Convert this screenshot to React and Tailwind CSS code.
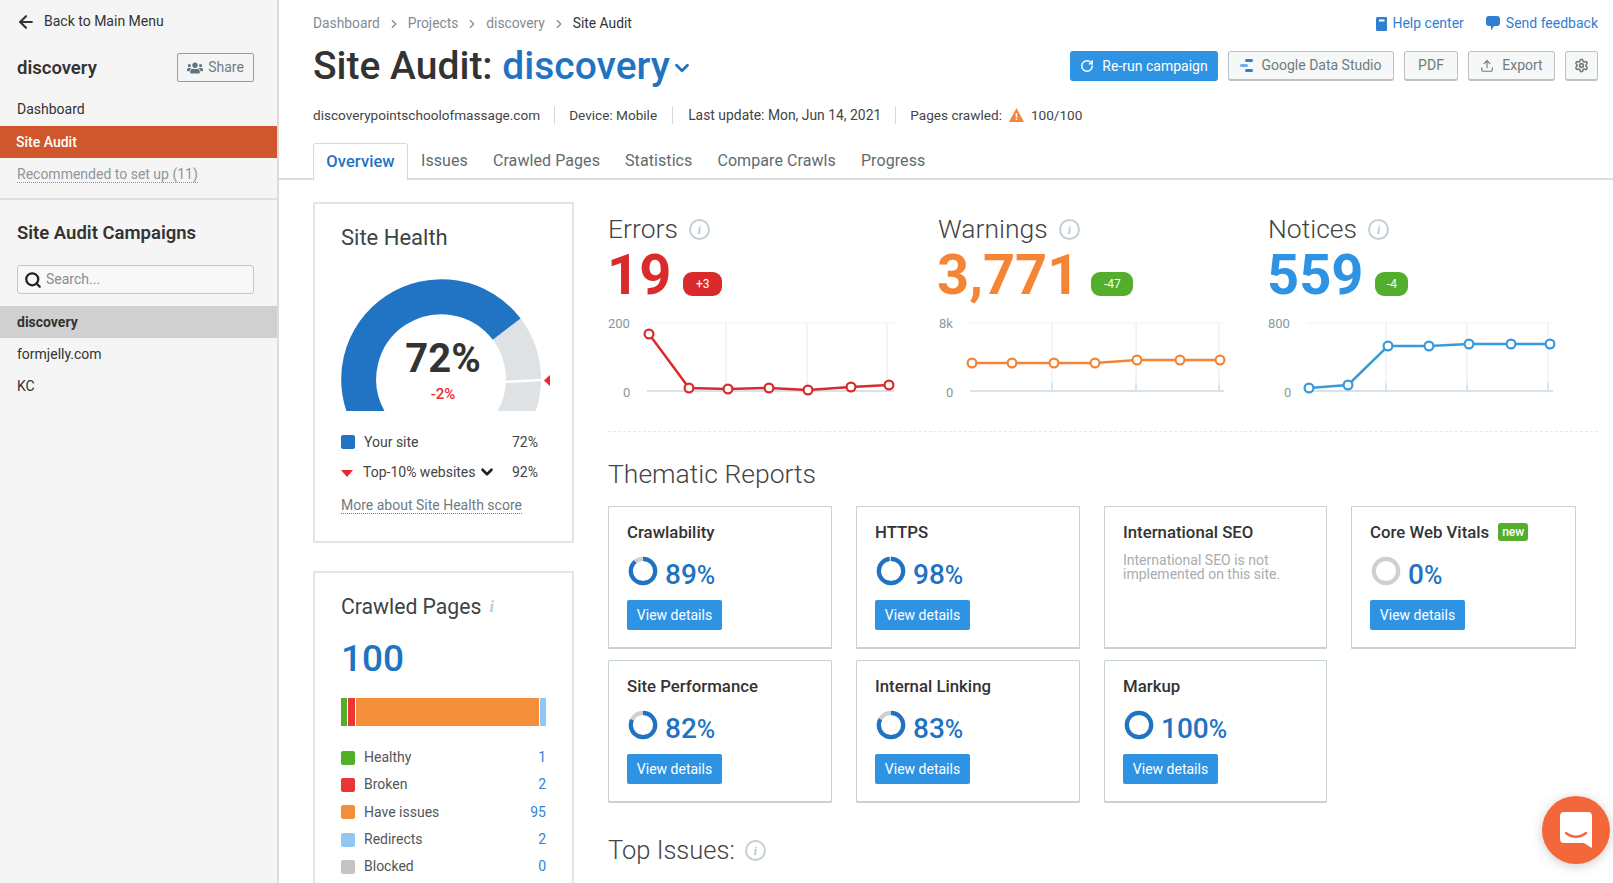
import { ArrowLeft, ChevronRight, ChevronDown, RotateCw, Upload, Settings, Search } from 'lucide-react';
import { FaUsers } from 'react-icons/fa';

const metrics = [
  {
    title: 'Errors', value: '19', badge: '+3', valueColor: 'text-[#d92b2b]', badgeColor: 'bg-[#d92b2b]', badgeWidth: 'w-[39px]', stroke: '#d92b2b',
    top: '200', topX: 0, zeroX: 15, gridFrom: 39, gridTo: 286, vlines: [118, 199, 279],
    points: [[41, 23], [81, 77], [120, 78], [161, 77], [200, 79], [243, 76], [281, 74]],
  },
  {
    title: 'Warnings', value: '3,771', badge: '-47', valueColor: 'text-[#f58536]', badgeColor: 'bg-[#52ae2b]', badgeWidth: 'w-[42px]', stroke: '#f58536',
    top: '8k', topX: 1, zeroX: 8, gridFrom: 32, gridTo: 286, vlines: [114, 198, 281],
    points: [[34, 52], [74, 52], [116, 52], [157, 52], [199, 49], [242, 49], [282, 49]],
  },
  {
    title: 'Notices', value: '559', badge: '-4', valueColor: 'text-[#2f93e4]', badgeColor: 'bg-[#52ae2b]', badgeWidth: 'w-[33px]', stroke: '#3a9ad9',
    top: '800', topX: 0, zeroX: 16, gridFrom: 39, gridTo: 285, vlines: [118, 199, 280],
    points: [[41, 77], [80, 74], [120, 35], [161, 35], [201, 33], [243, 33], [282, 33]],
  },
];

const reports = [
  { title: 'Crawlability', pct: 89 },
  { title: 'HTTPS', pct: 98 },
  { title: 'International SEO', note: true },
  { title: 'Core Web Vitals', pct: 0, isNew: true },
  { title: 'Site Performance', pct: 82 },
  { title: 'Internal Linking', pct: 83 },
  { title: 'Markup', pct: 100 },
];

const crawled = [
  { label: 'Healthy', count: '1', color: 'bg-[#52ae2b]' },
  { label: 'Broken', count: '2', color: 'bg-[#e93535]' },
  { label: 'Have issues', count: '95', color: 'bg-[#f38f3b]' },
  { label: 'Redirects', count: '2', color: 'bg-[#90c8f3]' },
  { label: 'Blocked', count: '0', color: 'bg-[#c4c4c4]' },
];

function Info() {
  return (
    <span className="flex h-[21px] w-[21px] items-center justify-center rounded-full border-2 border-[#c3d1d6] font-['Liberation_Serif',serif] text-[13px] italic leading-none text-[#9fb2b9]">
      i
    </span>
  );
}

function Donut({ pct }) {
  return (
    <svg width="30" height="30" viewBox="0 0 30 30" className="shrink-0">
      <circle cx="15" cy="15" r="12.2" fill="none" stroke="#cfcfcf" strokeWidth="4.2" />
      {pct > 0 && (
        <circle
          cx="15"
          cy="15"
          r="12.2"
          fill="none"
          stroke="#1f73c2"
          strokeWidth="4.2"
          pathLength="100"
          strokeDasharray={`${pct} 100`}
          transform="rotate(-90 15 15)"
        />
      )}
    </svg>
  );
}

function ReportCard({ report }) {
  return (
    <div className="h-[143px] rounded-[1px] border border-[#c8d2d5] border-b-2 bg-white px-[18px] pt-[14px]">
      <div className="flex h-[22px] items-center gap-[9px] whitespace-nowrap text-[16.8px] font-medium leading-none text-[#333]">
        {report.title}
        {report.isNew && (
          <span className="flex h-[18px] w-[30px] items-center justify-center rounded-[3px] bg-[#52ae2b] text-[12px] font-medium text-white">
            new
          </span>
        )}
      </div>
      {report.note ? (
        <p className="mt-[10px] text-[14px] leading-[14px] text-[#a7adb0]">
          International SEO is not
          <br />
          implemented on this site.
        </p>
      ) : (
        <>
          <div className="mt-[13px] flex h-[30px] items-center gap-[7px] pl-[1px]">
            <Donut pct={report.pct} />
            <span className="pt-[8px] text-[28px] font-medium leading-none text-[#1f73c2]">
              {report.pct}
              <span className="text-[25px]">%</span>
            </span>
          </div>
          <button className="mt-[14px] flex h-[30px] w-[95px] items-center justify-center rounded-[2px] bg-[#2f93e4] text-[14px] text-white">
            View details
          </button>
        </>
      )}
    </div>
  );
}

function Metric({ m }) {
  const line = m.points.map((p) => p.join(',')).join(' ');
  return (
    <div className="w-[330px] shrink-0">
      <div className="flex h-[28px] items-center gap-[11px] text-[26.5px] font-light leading-none text-[#444]">
        {m.title}
        <Info />
      </div>
      <div className="-ml-[1px] mt-[3px] flex h-[58px] items-center gap-[12px]">
        <span className={`text-[56px] font-bold leading-none ${m.valueColor}`}>{m.value}</span>
        <span className={`mt-[17px] flex h-[24px] items-center justify-center rounded-[9px] text-[12px] text-white ${m.badgeColor} ${m.badgeWidth}`}>
          {m.badge}
        </span>
      </div>
      <svg width="310" height="100" viewBox="0 0 310 100" className="mt-[7px] block">
        <line x1={m.gridFrom} x2={m.gridTo} y1="12" y2="12" stroke="#edf1f3" />
        {m.vlines.map((x) => (
          <line key={x} x1={x} x2={x} y1="12" y2="80" stroke="#e6ecef" />
        ))}
        {m.vlines.map((x) => (
          <line key={`t${x}`} x1={x} x2={x} y1="72" y2="80" stroke="#c3d4e2" />
        ))}
        <line x1={m.gridFrom} x2={m.gridTo} y1="80" y2="80" stroke="#c9d9e6" strokeWidth="1.5" />
        <text x={m.topX} y="17" fontSize="13" fill="#8b979c">{m.top}</text>
        <text x={m.zeroX} y="86" fontSize="13" fill="#8b979c">0</text>
        <polyline points={line} fill="none" stroke={m.stroke} strokeWidth="2.5" />
        {m.points.map(([x, y]) => (
          <circle key={x} cx={x} cy={y} r="4.4" fill="#fff" stroke={m.stroke} strokeWidth="2.2" />
        ))}
      </svg>
    </div>
  );
}

function OutlineButton({ className, children }) {
  return (
    <button className={`flex h-[30px] items-center justify-center gap-[8px] rounded-[3px] border border-[#b9c3c7] border-b-2 bg-[#f6f7f7] text-[14px] text-[#6e7c82] ${className}`}>
      {children}
    </button>
  );
}

function Sidebar() {
  return (
    <aside className="h-full w-[279px] shrink-0 border-r-2 border-[#dcdcdc] bg-[#f5f5f5] text-[14px] text-[#333]">
      <div className="flex h-[43px] items-center gap-[8px] pl-[16px]">
        <ArrowLeft size={20} strokeWidth={2.6} />
        <span>Back to Main Menu</span>
      </div>
      <div className="mt-[10px] flex h-[29px] items-center justify-between pl-[17px] pr-[23px]">
        <span className="pt-[2px] text-[18.5px] font-semibold">discovery</span>
        <button className="flex h-[29px] w-[77px] items-center justify-center gap-[5px] rounded-[2px] border border-[#8fa0a8] text-[14px] text-[#6e7c82]">
          <FaUsers size={16} className="text-[#5e7480]" />
          Share
        </button>
      </div>
      <div className="mt-[11px] flex h-[32px] items-center pl-[17px]">Dashboard</div>
      <div className="mt-[1px] flex h-[32px] items-center bg-[#d0562c] pl-[16px] font-medium text-white">Site Audit</div>
      <div className="flex h-[32px] items-center pl-[17px] text-[#8f9598]">
        <span className="border-b border-dotted border-[#8f9598] leading-[16px]">Recommended to set up (11)</span>
      </div>
      <div className="mt-[8px] border-t-2 border-[#dedede]" />
      <h2 className="mt-[22px] pl-[17px] text-[18.5px] font-semibold leading-[22px]">Site Audit Campaigns</h2>
      <div className="mx-[17px] mr-[23px] mt-[21px] flex h-[29px] items-center gap-[4px] rounded-[3px] border border-[#c6c6c6] bg-[#f8f8f8] pl-[6px] text-[#8c8c8c]">
        <Search size={18} strokeWidth={3} className="text-[#222]" />
        Search...
      </div>
      <div className="mt-[12px] flex h-[32px] items-center bg-[#d0d0d0] pl-[17px] font-bold">discovery</div>
      <div className="flex h-[32px] items-center pl-[17px]">formjelly.com</div>
      <div className="flex h-[32px] items-center pl-[17px]">KC</div>
    </aside>
  );
}

function Header() {
  return (
    <header className="pl-[34px] pr-[15px]">
      <div className="flex h-[47px] items-center justify-between text-[14px] text-[#7f8c92]">
        <div className="flex items-center gap-[7px] text-[13.8px]">
          <span>Dashboard</span>
          <ChevronRight size={14} />
          <span>Projects</span>
          <ChevronRight size={14} />
          <span>discovery</span>
          <ChevronRight size={14} />
          <span className="text-[#333]">Site Audit</span>
        </div>
        <div className="flex items-center gap-[22px] text-[#2f7fd0]">
          <span className="flex items-center gap-[5px]">
            <svg width="11" height="14" viewBox="0 0 11 14">
              <path d="M1.5 0H10a1 1 0 0 1 1 1v12a1 1 0 0 1-1 1H1.5A1.5 1.5 0 0 1 0 12.5v-11A1.5 1.5 0 0 1 1.5 0z" fill="#2f7fd0" />
              <rect x="3" y="2.5" width="5.5" height="2" fill="#fff" />
            </svg>
            Help center
          </span>
          <span className="flex items-center gap-[6px]">
            <svg width="14" height="15" viewBox="0 0 14 15">
              <path d="M3 0h8a3 3 0 0 1 3 3v4a3 3 0 0 1-3 3H8l-3 4.5V10H3a3 3 0 0 1-3-3V3a3 3 0 0 1 3-3z" fill="#2f7fd0" />
            </svg>
            Send feedback
          </span>
        </div>
      </div>
      <div className="mt-[4px] flex h-[30px] items-center justify-between">
        <h1 className="flex items-center whitespace-nowrap text-[39px] font-medium leading-none text-[#333]">
          Site Audit:&nbsp;<span className="text-[#1f73c2]">discovery</span>
          <ChevronDown size={22} strokeWidth={3} className="ml-[1px] mt-[4px] text-[#1f73c2]" />
        </h1>
        <div className="flex gap-[10px]">
          <button className="flex h-[30px] w-[148px] items-center justify-center gap-[8px] rounded-[3px] bg-[#2f93e4] text-[14px] text-white">
            <RotateCw size={14} strokeWidth={2.5} />
            Re-run campaign
          </button>
          <OutlineButton className="w-[166px]">
            <svg width="13" height="14" viewBox="0 0 13 14">
              <rect x="5" y="0" width="8" height="3" rx="1.5" fill="#2f7fd0" />
              <rect x="0" y="5" width="8" height="3" rx="1.5" fill="#6fb0ea" />
              <rect x="5" y="10" width="8" height="3" rx="1.5" fill="#2f7fd0" />
            </svg>
            Google Data Studio
          </OutlineButton>
          <OutlineButton className="w-[54px]">PDF</OutlineButton>
          <OutlineButton className="w-[87px]">
            <Upload size={14} />
            Export
          </OutlineButton>
          <OutlineButton className="w-[33px]">
            <Settings size={15} strokeWidth={2.5} />
          </OutlineButton>
        </div>
      </div>
      <div className="mt-[24px] flex h-[20px] items-center whitespace-nowrap text-[13.6px] text-[#444]">
        <span>discoverypointschoolofmassage.com</span>
        <span className="mx-[14px] h-[18px] border-l border-[#d5dadc]" />
        <span>Device: Mobile</span>
        <span className="mx-[15px] h-[18px] border-l border-[#d5dadc]" />
        <span className="text-[13.9px]">Last update: Mon, Jun 14, 2021</span>
        <span className="mx-[14px] h-[18px] border-l border-[#d5dadc]" />
        <span>Pages crawled:</span>
        <svg width="15" height="14" viewBox="0 0 15 14" className="mx-[7px]">
          <path d="M7.5 0 15 14H0z" fill="#f58536" />
          <rect x="6.7" y="5" width="1.6" height="4.5" fill="#fff" />
          <rect x="6.7" y="10.5" width="1.6" height="1.6" fill="#fff" />
        </svg>
        <span>100/100</span>
      </div>
    </header>
  );
}

function Tabs() {
  return (
    <nav className="mt-[19px] flex h-[36px] items-end gap-[25px] border-b-2 border-[#dcdfe0] pl-[34px] text-[16px] tracking-[0.08px] text-[#5f6b70]">
      <span className="-mb-[2px] -mr-[12px] flex h-[37px] w-[95px] items-center justify-center rounded-t-[3px] border border-b-0 border-[#d5d9db] bg-white pt-[1px] text-[16.5px] font-medium text-[#1f73c2]">
        Overview
      </span>
      {['Issues', 'Crawled Pages', 'Statistics', 'Compare Crawls', 'Progress'].map((t) => (
        <span key={t} className="flex h-[36px] items-center pt-[1px]">{t}</span>
      ))}
    </nav>
  );
}

function SiteHealth() {
  return (
    <section className="h-[341px] rounded-[1px] border-2 border-[#e2e5e6] bg-white px-[26px] pt-[21px]">
      <h3 className="text-[22px] leading-[26px] text-[#3d4347]">Site Health</h3>
      <div className="relative -ml-[6px] mt-[25px] h-[140px] w-[220px]">
        <svg width="220" height="140" viewBox="0 0 220 140" className="block">
          <defs>
            <clipPath id="gauge-clip">
              <rect x="0" y="0" width="220" height="135" />
            </clipPath>
          </defs>
          <g clipPath="url(#gauge-clip)" fill="none" strokeWidth="35">
            <path d="M171.7 53.1A82.5 82.5 0 0 1 177.4 144.25" stroke="#dee2e5" />
            <path d="M34.6 144.25A82.5 82.5 0 0 1 171.7 53.1" stroke="#2174c4" />
          </g>
          <line x1="168" y1="106" x2="206" y2="104" stroke="#fff" strokeWidth="2.5" />
          <path d="M215 99v11l-6-5.5z" fill="#e9262c" />
        </svg>
        <div className="absolute left-[48px] top-[63px] w-[120px] text-center text-[40px] font-bold leading-none text-[#333]">72%</div>
        <div className="absolute left-[48px] top-[111px] w-[120px] text-center text-[15px] font-medium leading-none text-[#f0282e]">-2%</div>
      </div>
      <div className="mt-[11px] flex h-[30px] items-center pr-[8px] text-[14px] text-[#444]">
        <span className="mr-[8px] h-[14px] w-[14px] rounded-[2px] bg-[#2174c4]" />
        <span className="ml-[1px]">Your site</span>
        <span className="ml-auto">72%</span>
      </div>
      <div className="flex h-[30px] items-center pr-[8px] text-[14px] text-[#444]">
        <span className="mr-[9px] mt-[2px] h-0 w-0 border-x-[6.5px] border-t-[7px] border-x-transparent border-t-[#e9262c]" />
        <span className="ml-[1px]">Top-10% websites</span>
        <ChevronDown size={18} strokeWidth={3.5} className="ml-[2px] text-[#222]" />
        <span className="ml-auto">92%</span>
      </div>
      <div className="mt-[8px] text-[14px] text-[#6f7b80]">
        <span className="border-b border-dotted border-[#6f7b80] leading-[16px]">More about Site Health score</span>
      </div>
    </section>
  );
}

function CrawledPages() {
  return (
    <section className="mt-[28px] h-[340px] rounded-[1px] border-2 border-[#e2e5e6] bg-white px-[26px] pt-[21px]">
      <h3 className="flex items-center gap-[8px] text-[21.2px] leading-[26px] text-[#3d4347]">
        Crawled Pages
        <span className="font-['Liberation_Serif',serif] text-[16px] font-bold italic text-[#bccad0]">i</span>
      </h3>
      <div className="mt-[17px] text-[37px] font-medium leading-[44px] text-[#1f73c2]">100</div>
      <div className="mt-[17px] flex h-[28px] gap-[1px]">
        <span className="w-[6px] bg-[#52ae2b]" />
        <span className="w-[7px] bg-[#e93535]" />
        <span className="flex-1 bg-[#f38f3b]" />
        <span className="w-[6px] bg-[#90c8f3]" />
      </div>
      <div className="mt-[18px]">
        {crawled.map((c) => (
          <div key={c.label} className="flex h-[27.3px] items-center text-[14px] text-[#555]">
            <span className={`mr-[9px] h-[14px] w-[14px] rounded-[2px] ${c.color}`} />
            {c.label}
            <span className="ml-auto text-[#2f85d4]">{c.count}</span>
          </div>
        ))}
      </div>
    </section>
  );
}

export default function App() {
  return (
    <div className="relative flex h-screen overflow-hidden bg-white font-['Roboto',sans-serif]">
      <Sidebar />
      <main className="min-w-0 flex-1">
        <Header />
        <Tabs />
        <div className="mt-[22px] flex gap-[34px] pl-[34px]">
          <div className="w-[261px] shrink-0">
            <SiteHealth />
            <CrawledPages />
          </div>
          <div className="min-w-0 flex-1 pr-[15px]">
            <div className="flex pt-[13px]">
              {metrics.map((m) => (
                <Metric key={m.title} m={m} />
              ))}
            </div>
            <div className="mt-[20px] border-t border-dashed border-[#e6e9ea]" />
            <h2 className="mt-[28px] text-[26.5px] font-light leading-[28px] text-[#444]">Thematic Reports</h2>
            <div className="mt-[18px] grid grid-cols-[224px_224px_223px_225px] gap-x-[24px] gap-y-[11px]">
              {reports.map((r) => (
                <ReportCard key={r.title} report={r} />
              ))}
            </div>
            <h2 className="mt-[33px] flex items-center gap-[10px] text-[25.5px] font-light leading-[28px] text-[#444]">
              Top Issues:
              <Info />
            </h2>
          </div>
        </div>
      </main>
      <button className="absolute left-[1542px] top-[796px] flex h-[68px] w-[68px] items-center justify-center rounded-full bg-[#f4673b] shadow-[0_2px_12px_rgba(0,0,0,0.2)]">
        <svg width="32" height="36" viewBox="0 0 32 36">
          <path d="M4 0h24a4 4 0 0 1 4 4v32l-8-5H4a4 4 0 0 1-4-4V4a4 4 0 0 1 4-4z" fill="#fff" />
          <path d="M6 21c6 5 14 5 20 0" fill="none" stroke="#f4673b" strokeWidth="2.4" strokeLinecap="round" />
        </svg>
      </button>
    </div>
  );
}
